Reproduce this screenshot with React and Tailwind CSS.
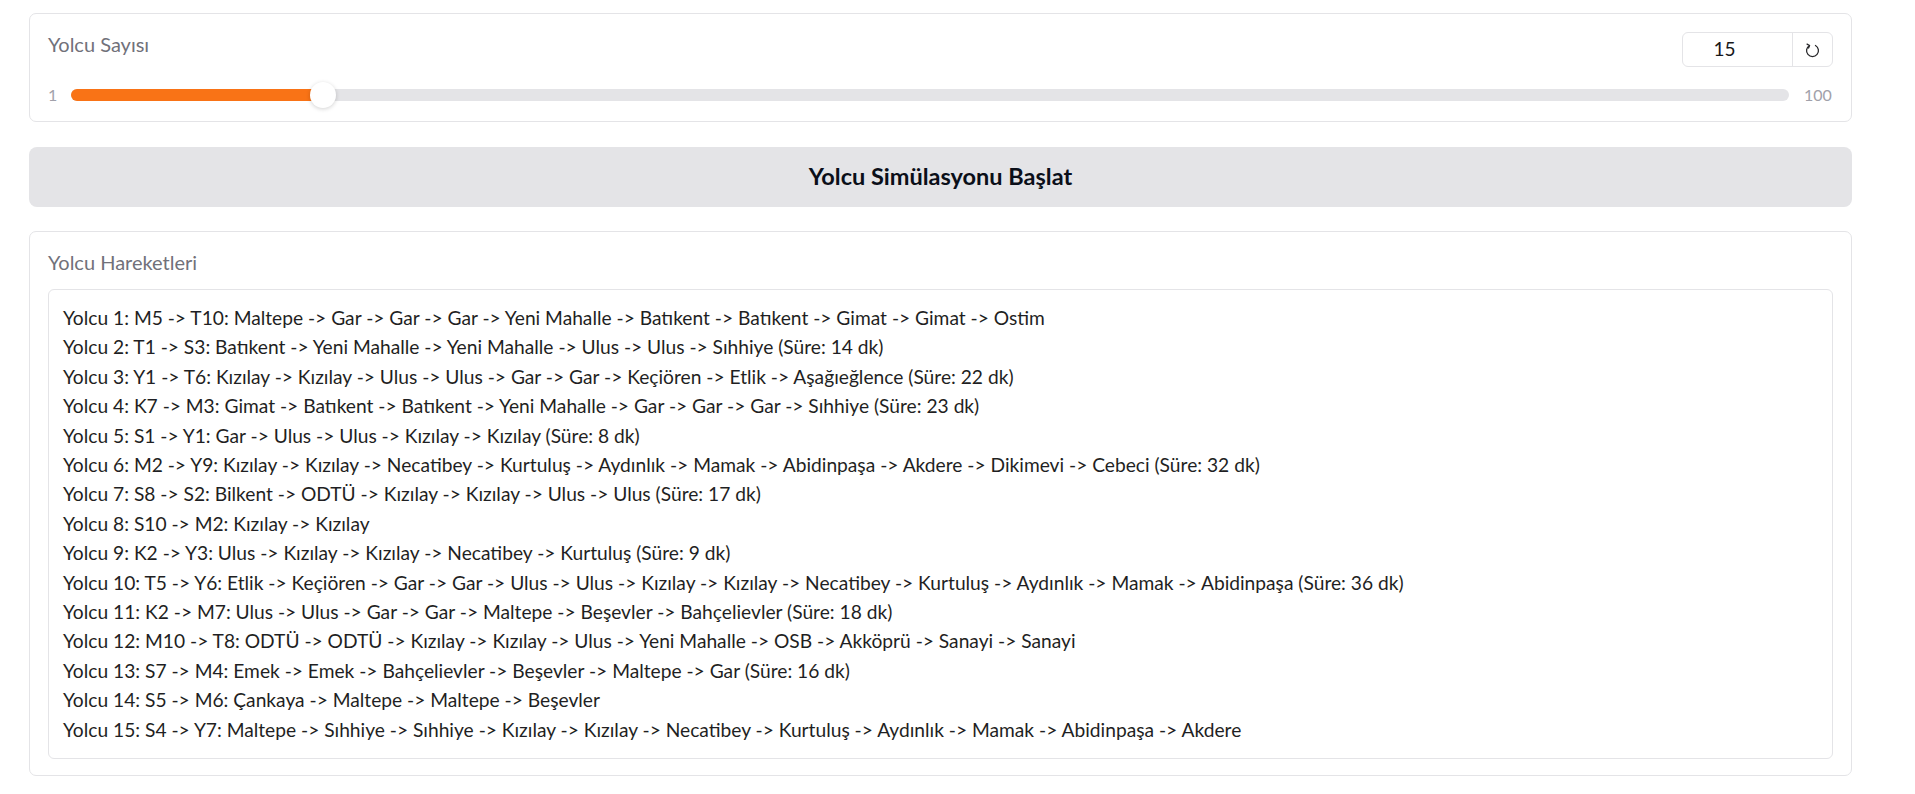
import React from "react";

const lines = [
  "Yolcu 1: M5 -> T10: Maltepe -> Gar -> Gar -> Gar -> Yeni Mahalle -> Batıkent -> Batıkent -> Gimat -> Gimat -> Ostim",
  "Yolcu 2: T1 -> S3: Batıkent -> Yeni Mahalle -> Yeni Mahalle -> Ulus -> Ulus -> Sıhhiye (Süre: 14 dk)",
  "Yolcu 3: Y1 -> T6: Kızılay -> Kızılay -> Ulus -> Ulus -> Gar -> Gar -> Keçiören -> Etlik -> Aşağıeğlence (Süre: 22 dk)",
  "Yolcu 4: K7 -> M3: Gimat -> Batıkent -> Batıkent -> Yeni Mahalle -> Gar -> Gar -> Gar -> Sıhhiye (Süre: 23 dk)",
  "Yolcu 5: S1 -> Y1: Gar -> Ulus -> Ulus -> Kızılay -> Kızılay (Süre: 8 dk)",
  "Yolcu 6: M2 -> Y9: Kızılay -> Kızılay -> Necatibey -> Kurtuluş -> Aydınlık -> Mamak -> Abidinpaşa -> Akdere -> Dikimevi -> Cebeci (Süre: 32 dk)",
  "Yolcu 7: S8 -> S2: Bilkent -> ODTÜ -> Kızılay -> Kızılay -> Ulus -> Ulus (Süre: 17 dk)",
  "Yolcu 8: S10 -> M2: Kızılay -> Kızılay",
  "Yolcu 9: K2 -> Y3: Ulus -> Kızılay -> Kızılay -> Necatibey -> Kurtuluş (Süre: 9 dk)",
  "Yolcu 10: T5 -> Y6: Etlik -> Keçiören -> Gar -> Gar -> Ulus -> Ulus -> Kızılay -> Kızılay -> Necatibey -> Kurtuluş -> Aydınlık -> Mamak -> Abidinpaşa (Süre: 36 dk)",
  "Yolcu 11: K2 -> M7: Ulus -> Ulus -> Gar -> Gar -> Maltepe -> Beşevler -> Bahçelievler (Süre: 18 dk)",
  "Yolcu 12: M10 -> T8: ODTÜ -> ODTÜ -> Kızılay -> Kızılay -> Ulus -> Yeni Mahalle -> OSB -> Akköprü -> Sanayi -> Sanayi",
  "Yolcu 13: S7 -> M4: Emek -> Emek -> Bahçelievler -> Beşevler -> Maltepe -> Gar (Süre: 16 dk)",
  "Yolcu 14: S5 -> M6: Çankaya -> Maltepe -> Maltepe -> Beşevler",
  "Yolcu 15: S4 -> Y7: Maltepe -> Sıhhiye -> Sıhhiye -> Kızılay -> Kızılay -> Necatibey -> Kurtuluş -> Aydınlık -> Mamak -> Abidinpaşa -> Akdere",
];

function ResetIcon() {
  return (
    <svg width="17" height="17" viewBox="0 0 16 16" fill="none" stroke="#27272a" strokeWidth="1.2" strokeLinecap="round" strokeLinejoin="round">
      <path d="M5.2 4.2 A5.6 5.6 0 1 0 10.8 4.2" />
      <path d="M2.9 2.9 L5.2 4.2 L4.3 6.6" />
    </svg>
  );
}

export default function App() {
  const value = 15;
  const frac = (value - 1) / 99;
  const thumbLeft = `calc(13px + ${frac} * (100% - 26px))`;
  return (
    <div
      className="min-h-[794px] bg-white pt-[13px] pl-[29px] pr-[63px] text-[#1f1f23]"
      style={{ fontFamily: "Lato, 'Noto Sans', sans-serif" }}
    >
      <div className="flex flex-col">
        {/* Slider card */}
        <div className="rounded-[7px] border border-[#e4e4e7] bg-white px-[18px] pt-[18px] pb-[13px]">
          <div className="flex h-[35px] items-start justify-between">
            <span className="text-[20px] leading-[24px] text-[#71717a]">Yolcu Sayısı</span>
            <div className="flex h-[35px] w-[151px] rounded-[6px] border border-[#e4e4e7]">
              <div className="flex flex-1 items-center justify-center pr-[26px] text-[19px] text-[#18181b]">15</div>
              <div className="flex w-[40px] items-center justify-center border-l border-[#e4e4e7]">
                <ResetIcon />
              </div>
            </div>
          </div>
          <div className="mt-[15px] flex h-[26px] items-center">
            <span className="w-[23px] text-[16px] text-[#a1a1aa]">1</span>
            <div className="relative h-[12px] flex-1 rounded-full bg-[#e4e4e7]">
              <div className="absolute left-0 top-0 h-full rounded-full bg-[#f97316]" style={{ width: thumbLeft }} />
              <div
                className="absolute top-1/2 h-[26px] w-[26px] -translate-x-1/2 -translate-y-1/2 rounded-full bg-white shadow-[0_1px_4px_rgba(0,0,0,0.18)]"
                style={{ left: thumbLeft }}
              />
            </div>
            <span className="ml-[15px] w-[29px] text-[16px] text-[#a1a1aa]">100</span>
          </div>
        </div>

        {/* Button */}
        <button className="mt-[25px] flex h-[60px] items-center justify-center rounded-[8px] bg-[#e4e4e7] text-[23.5px] font-bold text-[#0b0f19]">
          Yolcu Simülasyonu Başlat
        </button>

        {/* Output card */}
        <div className="mt-[24px] rounded-[7px] border border-[#e4e4e7] bg-white px-[18px] pt-[18px] pb-[16px]">
          <div className="h-[24px] text-[20px] leading-[24px] text-[#71717a]">Yolcu Hareketleri</div>
          <div className="mt-[15px] rounded-[6px] border border-[#e4e4e7] bg-white px-[14px] pt-[13px] pb-[14px] text-[19.2px] leading-[29.4px] text-[#1f1f23]">
            {lines.map((l, i) => (
              <div key={i} className="whitespace-nowrap">{l}</div>
            ))}
          </div>
        </div>
      </div>
    </div>
  );
}
